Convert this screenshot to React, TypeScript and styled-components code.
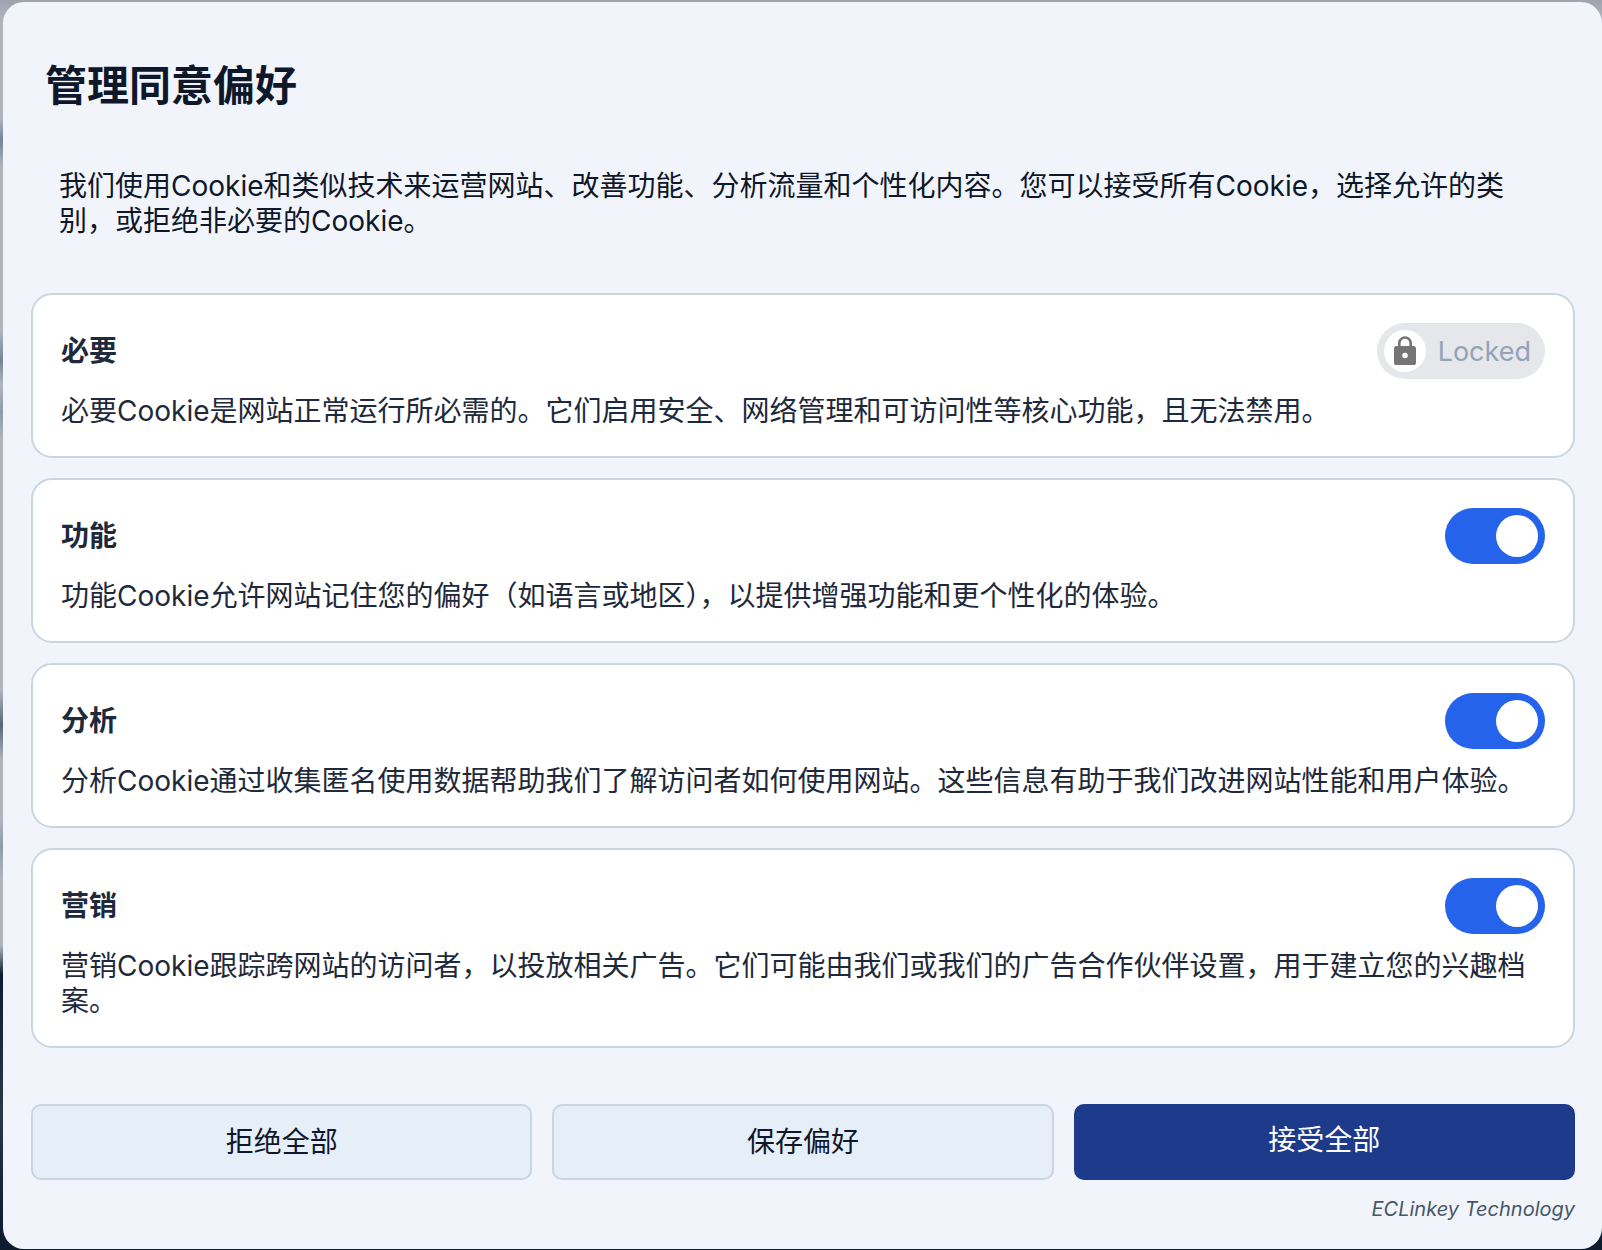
import { useState } from "react";
import styled, { createGlobalStyle } from "styled-components";

const GlobalStyle = createGlobalStyle`
  *, *::before, *::after { box-sizing: border-box; }
  body {
    margin: 0;
    font-family: Inter, "Noto Sans CJK SC", sans-serif;
    font-size: 28px;
    line-height: 35px;
    color: #0f172a;
    background: #0d1c2f;
  }
  button { font: inherit; cursor: pointer; }
`;

const Backdrop = styled.div`
  min-height: 100vh;
  padding: 2px 0 1px 3px;
  background: linear-gradient(
    #9ea3ae 0, #b1b4bd 20px, #b1b4bd 118px, #76849a 140px, #b1b4bd 166px,
    #b1b4bd 330px, #76849a 360px, #b1b4bd 385px, #8e99aa 412px, #b1b4bd 440px,
    #b1b4bd 690px, #5b6675 725px, #b1b4bd 760px, #b1b4bd 820px, #919bab 845px,
    #b1b4bd 880px, #b1b4bd 945px, #0d1c2f 975px, #2c3748 1110px, #0d1c2f 1235px
  );
`;

const Panel = styled.main`
  display: flex;
  flex-direction: column;
  padding: 57px 27px 26px 28px;
  border-radius: 21px;
  background: #f1f5fb;
`;

const Title = styled.h1`
  margin: 0 0 49px;
  padding: 0 14px;
  font-size: 42px;
  line-height: 53px;
  font-weight: 700;
`;

const Intro = styled.p`
  margin: 0 0 54px;
  padding: 8px 28px 0;
`;

const Categories = styled.div`
  display: flex;
  flex-direction: column;
  gap: 20px;
`;

const Card = styled.section`
  padding: 28px 28px 27px;
  border: 2px solid #cbd5e1;
  border-radius: 21px;
  background: #fff;
  color: #1e293b;
`;

const CardHeader = styled.div`
  display: flex;
  align-items: center;
  justify-content: space-between;
  min-height: 56px;
  margin-bottom: 15px;
`;

const CardTitle = styled.h2`
  margin: 0;
  font-size: 28px;
  line-height: 35px;
  font-weight: 700;
`;

const CardText = styled.p`
  margin: 0;
`;

const Switch = styled.input`
  appearance: none;
  display: flex;
  flex: none;
  width: 100px;
  height: 56px;
  margin: 0;
  padding: 7px;
  border-radius: 28px;
  background: #cbd5e1;
  cursor: pointer;

  &::before {
    content: "";
    width: 42px;
    height: 42px;
    border-radius: 50%;
    background: #fff;
  }

  &:checked {
    justify-content: flex-end;
    background: #2563eb;
  }
`;

const LockedPill = styled.span`
  display: flex;
  align-items: center;
  gap: 12px;
  height: 56px;
  padding: 0 14px 0 7px;
  border-radius: 28px;
  background: #e5e7eb;
  color: #94a3b8;
  font-size: 27px;
`;

const LockKnob = styled.span`
  display: grid;
  place-items: center;
  width: 42px;
  height: 42px;
  border-radius: 50%;
  background: #fff;
`;

const Actions = styled.div`
  display: grid;
  grid-template-columns: repeat(3, 1fr);
  gap: 20px;
  margin-top: 56px;
`;

const ActionButton = styled.button<{ $primary?: boolean }>`
  height: 76px;
  padding: ${({ $primary }) => ($primary ? "0 0 4px" : "0")};
  border: ${({ $primary }) => ($primary ? "0" : "2px solid #cbd5e1")};
  border-radius: 10px;
  background: ${({ $primary }) => ($primary ? "#1e3a8a" : "#e6eef8")};
  color: ${({ $primary }) => ($primary ? "#fff" : "#0f172a")};
`;

const Credit = styled.footer`
  margin-top: 15px;
  font-size: 20px;
  line-height: 28px;
  font-style: italic;
  text-align: right;
  color: #475569;
`;

const LockIcon = () => (
  <svg width="22" height="30" viewBox="0 0 22 30" aria-hidden="true">
    <path d="M5.3 11V7.2a5.7 5.7 0 0 1 11.4 0V11" fill="none" stroke="#757575" strokeWidth="2.6" />
    <path
      fillRule="evenodd"
      fill="#757575"
      d="M2.6 10h16.8A2.6 2.6 0 0 1 22 12.6V26.4A2.6 2.6 0 0 1 19.4 29H2.6A2.6 2.6 0 0 1 0 26.4V12.6A2.6 2.6 0 0 1 2.6 10ZM11 16.7a2.8 2.8 0 1 0 0 5.6 2.8 2.8 0 0 0 0-5.6Z"
    />
  </svg>
);

type Category = { id: string; title: string; text: string; locked?: boolean };

const categories: Category[] = [
  {
    id: "necessary",
    title: "必要",
    text: "必要Cookie是网站正常运行所必需的。它们启用安全、网络管理和可访问性等核心功能，且无法禁用。",
    locked: true,
  },
  {
    id: "functional",
    title: "功能",
    text: "功能Cookie允许网站记住您的偏好（如语言或地区），以提供增强功能和更个性化的体验。",
  },
  {
    id: "analytics",
    title: "分析",
    text: "分析Cookie通过收集匿名使用数据帮助我们了解访问者如何使用网站。这些信息有助于我们改进网站性能和用户体验。",
  },
  {
    id: "marketing",
    title: "营销",
    text: "营销Cookie跟踪跨网站的访问者，以投放相关广告。它们可能由我们或我们的广告合作伙伴设置，用于建立您的兴趣档案。",
  },
];

export default function App() {
  const [enabled, setEnabled] = useState<Record<string, boolean>>({
    functional: true,
    analytics: true,
    marketing: true,
  });
  const setAll = (value: boolean) =>
    setEnabled({ functional: value, analytics: value, marketing: value });

  return (
    <>
      <GlobalStyle />
      <Backdrop lang="zh-CN">
        <Panel>
          <Title>管理同意偏好</Title>
          <Intro>
            我们使用Cookie和类似技术来运营网站、改善功能、分析流量和个性化内容。您可以接受所有Cookie，选择允许的类别，或拒绝非必要的Cookie。
          </Intro>
          <Categories>
            {categories.map(({ id, title, text, locked }) => (
              <Card key={id}>
                <CardHeader>
                  <CardTitle>
                    {locked ? title : <label htmlFor={id}>{title}</label>}
                  </CardTitle>
                  {locked ? (
                    <LockedPill>
                      <LockKnob>
                        <LockIcon />
                      </LockKnob>
                      Locked
                    </LockedPill>
                  ) : (
                    <Switch
                      id={id}
                      type="checkbox"
                      role="switch"
                      checked={enabled[id]}
                      onChange={(e) => setEnabled({ ...enabled, [id]: e.target.checked })}
                    />
                  )}
                </CardHeader>
                <CardText>{text}</CardText>
              </Card>
            ))}
          </Categories>
          <Actions>
            <ActionButton type="button" onClick={() => setAll(false)}>拒绝全部</ActionButton>
            <ActionButton type="button">保存偏好</ActionButton>
            <ActionButton type="button" $primary onClick={() => setAll(true)}>接受全部</ActionButton>
          </Actions>
          <Credit>ECLinkey Technology</Credit>
        </Panel>
      </Backdrop>
    </>
  );
}
